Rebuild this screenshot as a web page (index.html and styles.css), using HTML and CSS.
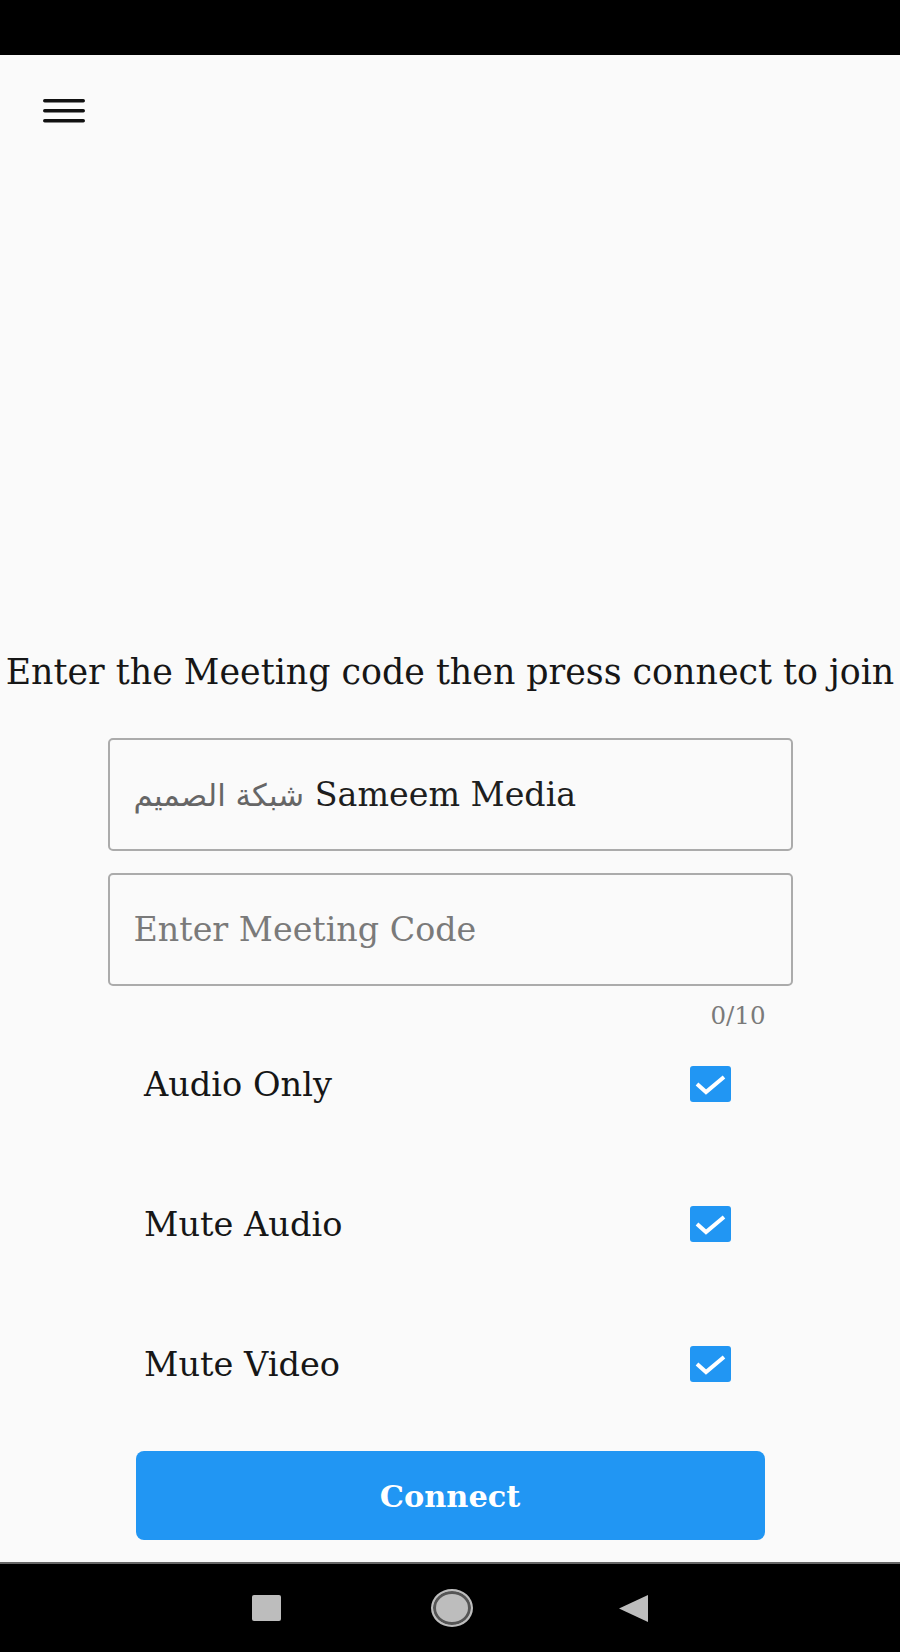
FILE: index.html
```html
<!DOCTYPE html>
<html lang="en">
<head>
<meta charset="utf-8">
<title>Join Meeting</title>
<link rel="stylesheet" href="styles.css">
</head>
<body>
<div class="screen">
  <div class="statusbar"></div>
  <main class="content">
    <header class="toolbar">
      <button class="menu" aria-label="Menu">
        <svg width="42" height="24" viewBox="0 0 42 24">
          <rect x="0" y="0" width="42" height="3.4" rx="1.7" fill="#111"/>
          <rect x="0" y="10" width="42" height="3.4" rx="1.7" fill="#111"/>
          <rect x="0" y="20" width="42" height="3.4" rx="1.7" fill="#111"/>
        </svg>
      </button>
    </header>
    <p class="prompt">Enter the Meeting code then press connect to join</p>
    <div class="form">
      <div class="field"><span class="arabic">شبكة الصميم</span>&nbsp;Sameem Media</div>
      <div class="field placeholder">Enter Meeting Code</div>
      <div class="counter">0/10</div>
      <div class="options">
        <label class="option"><span>Audio Only</span><span class="check"><svg width="41" height="36" viewBox="0 0 41 36"><path d="M7 18 L16 26 L34 11" fill="none" stroke="#fff" stroke-width="4"/></svg></span></label>
        <label class="option"><span>Mute Audio</span><span class="check"><svg width="41" height="36" viewBox="0 0 41 36"><path d="M7 18 L16 26 L34 11" fill="none" stroke="#fff" stroke-width="4"/></svg></span></label>
        <label class="option"><span>Mute Video</span><span class="check"><svg width="41" height="36" viewBox="0 0 41 36"><path d="M7 18 L16 26 L34 11" fill="none" stroke="#fff" stroke-width="4"/></svg></span></label>
      </div>
      <button class="connect">Connect</button>
    </div>
  </main>
  <nav class="navbar">
    <span class="nav-square"></span>
    <span class="nav-circle"></span>
    <svg class="nav-back" width="29" height="27" viewBox="0 0 29 27"><path d="M29 0 L29 27 L0 13.5 Z" fill="#bdbdbd"/></svg>
  </nav>
</div>
</body>
</html>
```
FILE: styles.css
```css
html, body {
  margin: 0;
  padding: 0;
  background: #000;
}
.screen {
  width: 900px;
  height: 1652px;
  display: flex;
  flex-direction: column;
  font-family: "DejaVu Serif", serif;
  color: #161616;
}
.statusbar {
  height: 55px;
  background: #000;
  flex: none;
}
.content {
  flex: 1;
  background: #fafafa;
  display: flex;
  flex-direction: column;
}
.toolbar {
  height: 112px;
  display: flex;
  align-items: center;
  padding-left: 43px;
}
.menu {
  border: 0;
  background: none;
  padding: 0;
  display: flex;
}
.prompt {
  margin: 485px 0 0;
  text-align: center;
  font-size: 34.8px;
  line-height: 40px;
  white-space: nowrap;
}
.form {
  display: flex;
  flex-direction: column;
  align-items: center;
  margin-top: 46px;
}
.field {
  box-sizing: border-box;
  width: 685px;
  height: 113px;
  border: 2px solid #ababab;
  border-radius: 5px;
  display: flex;
  align-items: center;
  padding-left: 24px;
  font-size: 33.3px;
  color: #1e1e1e;
  white-space: nowrap;
}
.field + .field {
  margin-top: 22px;
}
.arabic {
  font-family: "DejaVu Sans", sans-serif;
  font-size: 30.8px;
  color: #666;
}
.placeholder {
  color: #7a7a7a;
}
.counter {
  box-sizing: border-box;
  width: 685px;
  padding-right: 27px;
  text-align: right;
  margin-top: 18px;
  font-size: 24.5px;
  line-height: 24px;
  color: #7a7a7a;
}
.options {
  align-self: flex-start;
  width: 587px;
  margin: 38px 0 0 144px;
  display: flex;
  flex-direction: column;
  gap: 104px;
}
.option {
  height: 36px;
  display: flex;
  align-items: center;
  justify-content: space-between;
  font-size: 33.6px;
}
.check {
  width: 41px;
  height: 36px;
  border-radius: 3px;
  background: #2196f3;
  display: flex;
}
.connect {
  margin-top: 69px;
  width: 629px;
  height: 89px;
  border: 0;
  border-radius: 8px;
  background: #2196f3;
  color: #fff;
  font-family: "DejaVu Serif", serif;
  font-weight: bold;
  font-size: 30.4px;
}
.navbar {
  height: 90px;
  flex: none;
  background: #000;
  border-top: 2px solid #666;
  box-sizing: border-box;
  display: flex;
  align-items: center;
  justify-content: center;
}
.nav-square {
  width: 29px;
  height: 26px;
  background: #bdbdbd;
  border-radius: 2px;
}
.nav-circle {
  width: 42px;
  height: 38px;
  box-sizing: border-box;
  border-radius: 50%;
  border: 2px solid #bdbdbd;
  background: #bdbdbd;
  box-shadow: inset 0 0 0 3px #555;
  margin: 0 146px 0 150px;
}
.nav-back {
  display: block;
}
```
